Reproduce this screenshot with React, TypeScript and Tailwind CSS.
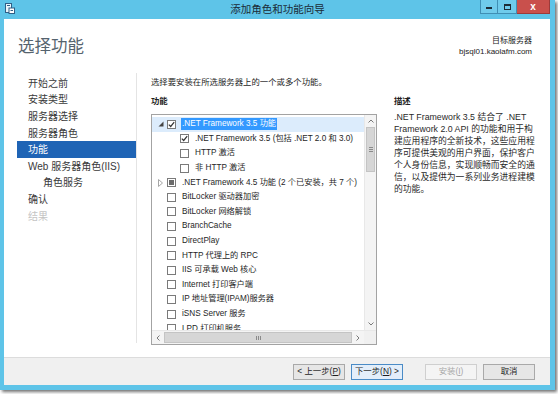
import React from 'react';

type Row = {
  level: number;
  exp?: 'open' | 'closed';
  state: 'checked' | 'partial' | 'none';
  label: string;
  selected?: boolean;
};

const rows: Row[] = [
  { level: 0, exp: 'open', state: 'checked', label: '.NET Framework 3.5 功能', selected: true },
  { level: 1, state: 'checked', label: '.NET Framework 3.5 (包括 .NET 2.0 和 3.0)' },
  { level: 1, state: 'none', label: 'HTTP 激活' },
  { level: 1, state: 'none', label: '非 HTTP 激活' },
  { level: 0, exp: 'closed', state: 'partial', label: '.NET Framework 4.5 功能 (2 个已安装，共 7 个)' },
  { level: 0, state: 'none', label: 'BitLocker 驱动器加密' },
  { level: 0, state: 'none', label: 'BitLocker 网络解锁' },
  { level: 0, state: 'none', label: 'BranchCache' },
  { level: 0, state: 'none', label: 'DirectPlay' },
  { level: 0, state: 'none', label: 'HTTP 代理上的 RPC' },
  { level: 0, state: 'none', label: 'IIS 可承载 Web 核心' },
  { level: 0, state: 'none', label: 'Internet 打印客户端' },
  { level: 0, state: 'none', label: 'IP 地址管理(IPAM)服务器' },
  { level: 0, state: 'none', label: 'iSNS Server 服务' },
  { level: 0, state: 'none', label: 'LPD 打印机服务' },
];

const navItems = [
  { label: '开始之前' },
  { label: '安装类型' },
  { label: '服务器选择' },
  { label: '服务器角色' },
  { label: '功能', active: true },
  { label: 'Web 服务器角色(IIS)' },
  { label: '角色服务', indent: true },
  { label: '确认' },
  { label: '结果', disabled: true },
];

const descLines = [
  '.NET Framework 3.5 结合了 .NET',
  'Framework 2.0 API 的功能和用于构',
  '建应用程序的全新技术，这些应用程',
  '序可提供美观的用户界面，保护客户',
  '个人身份信息，实现顺畅而安全的通',
  '信，以及提供为一系列业务进程建模',
  '的功能。',
];

function CheckBox({ state }: { state: Row['state'] }) {
  return (
    <div className="w-[9px] h-[9px] border border-[#7a7a7a] bg-white flex items-center justify-center shrink-0">
      {state === 'checked' && (
        <svg width="7" height="7" viewBox="0 0 7 7">
          <path d="M0.8 3.6 L2.7 5.5 L6.2 1.2" stroke="#333" strokeWidth="1.2" fill="none" />
        </svg>
      )}
      {state === 'partial' && <div className="w-[5px] h-[5px] bg-[#6b6b6b]" />}
    </div>
  );
}

function Expander({ exp }: { exp?: Row['exp'] }) {
  if (exp === 'open') {
    return (
      <svg width="6" height="6" viewBox="0 0 6 6" className="shrink-0">
        <path d="M5.5 0.5 L5.5 5.5 L0.5 5.5 Z" fill="#444" />
      </svg>
    );
  }
  if (exp === 'closed') {
    return (
      <svg width="5" height="8" viewBox="0 0 5 8" className="shrink-0">
        <path d="M0.5 0.5 L4.5 4 L0.5 7.5 Z" fill="none" stroke="#a6a6a6" strokeWidth="1" />
      </svg>
    );
  }
  return <div className="w-[6px] shrink-0" />;
}

function FeatureList() {
  return (
    <div className="h-[231px] border border-[#a3a3a3] flex flex-col bg-white">
      <div className="flex-1 flex min-h-0">
        <div className="flex-1 overflow-hidden pt-[2px]">
          {rows.map((r, i) => (
            <div
              key={i}
              className={`h-[14.6px] flex items-center whitespace-nowrap ${r.selected ? 'bg-[#dcecfc]' : ''}`}
            >
              <div className={`flex items-center ${r.level === 1 ? 'pl-[28px]' : 'pl-[2px]'}`}>
                {r.level === 0 && (
                  <div className="w-[13px] flex items-center justify-center">
                    <Expander exp={r.exp} />
                  </div>
                )}
                <CheckBox state={r.state} />
                <span
                  className={`ml-[5px] px-[1px] leading-[12px] text-[8.2px] ${
                    r.selected ? 'bg-[#3399ff] text-white' : 'text-[#1e1e1e]'
                  }`}
                >
                  {r.label}
                </span>
              </div>
            </div>
          ))}
        </div>
        {/* vertical scrollbar */}
        <div className="w-[12px] bg-[#f4f4f4] border-l border-[#e8e8e8] flex flex-col">
          <div className="h-[12px] flex items-center justify-center">
            <svg width="6" height="4" viewBox="0 0 6 4">
              <path d="M0.5 3.5 L3 1 L5.5 3.5" stroke="#7a7a7a" fill="none" strokeWidth="1" />
            </svg>
          </div>
          <div className="h-[45px] mx-[1px] bg-[#d6d6d6] border border-[#c4c4c4] flex flex-col items-center justify-center gap-[1px]">
            <div className="w-[4px] h-px bg-[#8a8a8a]" />
            <div className="w-[4px] h-px bg-[#8a8a8a]" />
            <div className="w-[4px] h-px bg-[#8a8a8a]" />
          </div>
          <div className="flex-1" />
          <div className="h-[12px] flex items-center justify-center">
            <svg width="6" height="4" viewBox="0 0 6 4">
              <path d="M0.5 0.5 L3 3 L5.5 0.5" stroke="#7a7a7a" fill="none" strokeWidth="1" />
            </svg>
          </div>
        </div>
      </div>
      {/* horizontal scrollbar */}
      <div className="h-[14px] flex bg-[#f4f4f4] border-t border-[#e8e8e8]">
        <div className="w-[12px] flex items-center justify-center">
          <svg width="4" height="6" viewBox="0 0 4 6">
            <path d="M3.5 0.5 L1 3 L3.5 5.5" stroke="#7a7a7a" fill="none" strokeWidth="1" />
          </svg>
        </div>
        <div className="flex-1 my-[1px] bg-[#d6d6d6] border border-[#c4c4c4] flex items-center justify-center gap-[1px]">
          <div className="w-px h-[4px] bg-[#8a8a8a]" />
          <div className="w-px h-[4px] bg-[#8a8a8a]" />
          <div className="w-px h-[4px] bg-[#8a8a8a]" />
        </div>
        <div className="w-[12px] flex items-center justify-center">
          <svg width="4" height="6" viewBox="0 0 4 6">
            <path d="M0.5 0.5 L3 3 L0.5 5.5" stroke="#7a7a7a" fill="none" strokeWidth="1" />
          </svg>
        </div>
        <div className="w-[12px] bg-[#f0f0f0]" />
      </div>
    </div>
  );
}

function Btn({ children, kind }: { children: React.ReactNode; kind?: 'default' | 'disabled' | 'plain' }) {
  const cls =
    kind === 'default'
      ? 'bg-[#e3eefa] border-[#4a8bc6] text-[#1e1e1e]'
      : kind === 'disabled'
      ? 'bg-[#f4f4f4] border-[#cfcfcf] text-[#a8a8a8]'
      : 'bg-[#e6e6e6] border-[#a9a9a9] text-[#1e1e1e]';
  return (
    <div className={`w-[52px] h-[16px] border flex items-center justify-center text-[8.4px] ${cls}`}>
      {children}
    </div>
  );
}

export default function App() {
  return (
    <div className="w-[558px] h-[394px] bg-white overflow-hidden font-['Liberation_Sans','Noto_Sans_CJK_SC',sans-serif]">
      <div className="w-[555px] h-[390px] bg-[#5ec4e8] flex flex-col pl-[4px] pr-[5px] pb-[5px] shadow-[2px_2px_3px_rgba(0,0,0,0.55)]">
        {/* title bar */}
        <div className="h-[19px] grid grid-cols-[1fr_auto_1fr] -ml-[4px] -mr-[5px]">
          <div className="pl-[5px] pt-[3px]">
            <svg width="10" height="11" viewBox="0 0 10 11">
              <rect x="0.5" y="0.5" width="6" height="9" fill="#eaf6fb" stroke="#2f5f86" />
              <rect x="2" y="2" width="3" height="1" fill="#2f5f86" />
              <rect x="4" y="5" width="5.5" height="5.5" fill="#ffffff" stroke="#2f5f86" />
              <rect x="5.5" y="7" width="2.5" height="1" fill="#2f5f86" />
            </svg>
          </div>
          <div className="text-[10.5px] text-[#1b2b36] leading-[19px]">添加角色和功能向导</div>
          <div className="flex justify-end pr-[5px]">
            <div className="w-[18px] h-[14px] border border-[#3f8fb4] border-t-0 bg-[#6fcbeb] flex items-center justify-center">
              <div className="w-[6px] h-[2px] bg-[#1d2c36] mt-[3px]" />
            </div>
            <div className="w-[19px] h-[14px] border border-[#3f8fb4] border-t-0 border-l-0 bg-[#6fcbeb] flex items-center justify-center">
              <div className="w-[7px] h-[6px] border border-[#1d2c36] border-t-2" />
            </div>
            <div className="w-[33px] h-[14px] border border-[#9c3a3a] border-t-0 border-l-0 bg-[#c9504c] flex items-center justify-center">
              <span className="text-white text-[10px] font-bold leading-none">x</span>
            </div>
          </div>
        </div>

        {/* client */}
        <div className="flex-1 bg-white flex flex-col">
          {/* header */}
          <div className="h-[51px] flex justify-between items-start pl-[14px] pr-[18px]">
            <div className="mt-[17px] text-[16.5px] leading-[20px] text-[#55636e]">选择功能</div>
            <div className="mt-[16px] text-right text-[8px] leading-[11px] text-[#222]">
              <div>目标服务器</div>
              <div>bjsql01.kaolafm.com</div>
            </div>
          </div>

          {/* body */}
          <div className="flex-1 flex min-h-0">
            <div className="w-[132px] pl-[13px] pt-[5px]">
              {navItems.map((n, i) => (
                <div
                  key={i}
                  className={`h-[16.6px] flex items-center text-[10px] whitespace-nowrap ${
                    n.indent ? 'pl-[26px]' : 'pl-[11px]'
                  } ${
                    n.active
                      ? 'bg-[#1f64b5] text-white'
                      : n.disabled
                      ? 'text-[#c4c4c4]'
                      : 'text-[#3a3a3a]'
                  }`}
                >
                  {n.label}
                </div>
              ))}
            </div>
            <div className="w-px bg-[#e4e4e4] mt-[3px] mb-[14px]" />

            <div className="flex-1 pl-[14px] pt-[6px]">
              <div className="text-[8.4px] leading-[12px] text-[#1e1e1e]">选择要安装在所选服务器上的一个或多个功能。</div>
              <div className="flex mt-[7px]">
                <div className="w-[226px]">
                  <div className="text-[8.4px] leading-[12px] font-bold text-[#1e1e1e] mb-[7px]">功能</div>
                  <FeatureList />
                </div>
                <div className="ml-[17px] w-[150px]">
                  <div className="text-[8.4px] leading-[12px] font-bold text-[#1e1e1e] mb-[4px]">描述</div>
                  <div className="text-[8.8px] leading-[12px] text-[#2a2a2a] whitespace-nowrap">
                    {descLines.map((l, i) => (
                      <div key={i}>{l}</div>
                    ))}
                  </div>
                </div>
              </div>
            </div>
          </div>

          {/* footer */}
          <div className="h-[28px] bg-[#f0f0f0] border-t border-[#dcdcdc] flex items-center justify-end pr-[15px]">
            <Btn kind="plain">&lt; 上一步(<u>P</u>)</Btn>
            <div className="w-[6px]" />
            <Btn kind="default">下一步(<u>N</u>) &gt;</Btn>
            <div className="w-[22px]" />
            <Btn kind="disabled">安装(<u>I</u>)</Btn>
            <div className="w-[6px]" />
            <Btn kind="plain">取消</Btn>
          </div>
        </div>
      </div>
    </div>
  );
}
